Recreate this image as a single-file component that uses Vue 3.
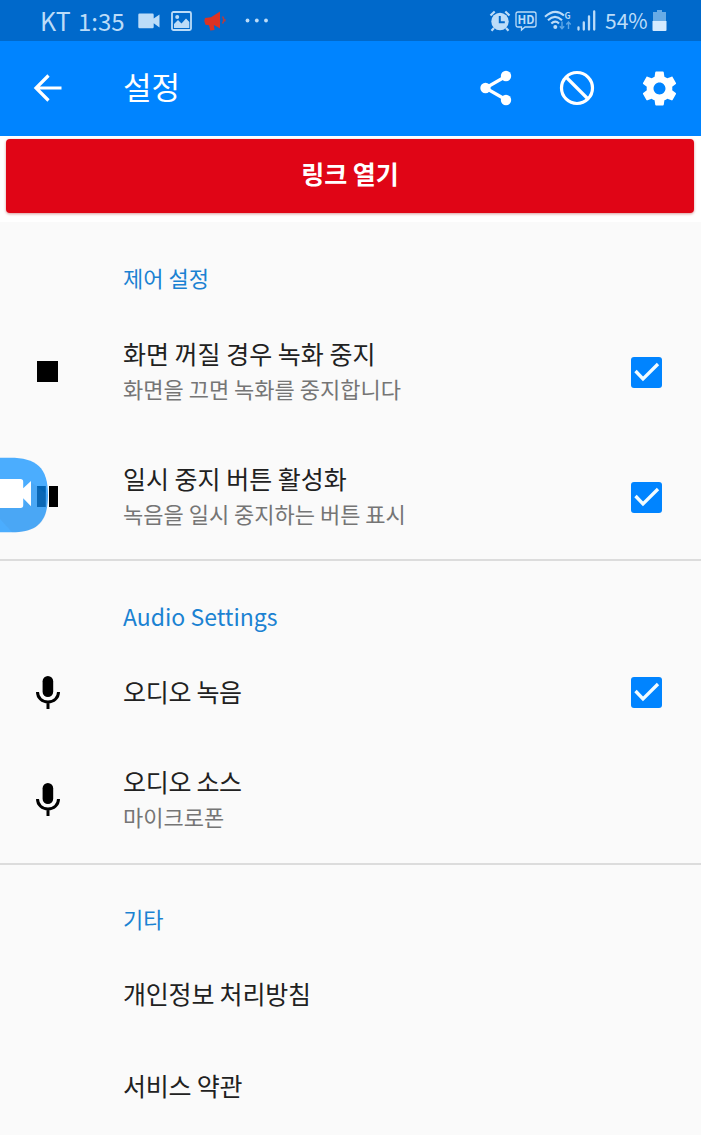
<script setup>
import { ref } from 'vue';

const sections = ref([
  {
    title: '제어 설정',
    key: 'control',
    items: [
      { icon: 'stop', title: '화면 꺼질 경우 녹화 중지', summary: '화면을 끄면 녹화를 중지합니다', checked: true },
      { icon: 'pause', title: '일시 중지 버튼 활성화', summary: '녹음을 일시 중지하는 버튼 표시', checked: true },
    ],
  },
  {
    title: 'Audio Settings',
    key: 'audio',
    items: [
      { icon: 'mic', title: '오디오 녹음', checked: true },
      { icon: 'mic', title: '오디오 소스', summary: '마이크로폰' },
    ],
  },
  {
    title: '기타',
    key: 'etc',
    items: [{ title: '개인정보 처리방침' }, { title: '서비스 약관' }],
  },
]);

const toggle = (item) => {
  if (item.checked !== undefined) item.checked = !item.checked;
};
</script>

<template>
  <div class="screen">
    <div class="status-bar">
      <div class="status-left">
        <span class="carrier">KT</span>
        <span class="clock">1:35</span>
        <svg class="st-video" width="22" height="16" viewBox="0 0 22 16">
          <path d="M1.5 0.5h13a1.2 1.2 0 0 1 1.2 1.2V5.5L21.5 1.5v13L15.7 10.3V14a1.2 1.2 0 0 1-1.2 1.2h-13A1.2 1.2 0 0 1 .3 14V1.7A1.2 1.2 0 0 1 1.5.5z" />
        </svg>
        <svg class="st-image" width="21" height="20" viewBox="0 0 21 20">
          <rect x="1" y="1" width="19" height="18" rx="1.5" fill="none" stroke="#bcdcf8" stroke-width="1.8" />
          <circle cx="6.2" cy="6" r="2" />
          <path d="M3 17V13L7 9l3.500 3.500L15 7.500l3.300 3.500V17z" />
        </svg>
        <svg class="st-horn" width="22" height="20" viewBox="0 0 22 20">
          <path fill="#dc3222" d="M1 7l6-.8L16 .5v17L10.500 14.200l-.7 0 .8 4.800-4.300.5-1.300-5.300-3.500-.4L.3 10z" />
          <path d="M18.500 5.500q2.500 3.200 0 7M20.800 8v2.500" fill="none" stroke="#dc3222" stroke-opacity="0.800" stroke-width="1.500" />
        </svg>
        <svg class="st-more" width="24" height="5" viewBox="0 0 24 5">
          <circle cx="2.500" cy="2.500" r="1.900" />
          <circle cx="11.800" cy="2.500" r="1.900" />
          <circle cx="21" cy="2.500" r="1.900" />
        </svg>
      </div>
      <div class="status-right">
        <svg width="22" height="22" viewBox="0 0 22 22">
          <circle cx="11" cy="11.500" r="8.700" />
          <path d="M1.500 5.500l4.200-4M20.500 5.500l-4.200-4M5 18l-2.500 2.800M17 18l2.500 2.800" stroke="#bcdcf8" stroke-width="2.200" fill="none" />
          <path d="M10.800 6v6.300h5" stroke="#036acb" stroke-width="2" fill="none" />
        </svg>
        <svg class="st-hd" width="22" height="20" viewBox="0 0 22 20">
          <path d="M3 1h16q2 0 2 2v11q0 2-2 2h-9l-3.500 3V16H3q-2 0-2-2V3q0-2 2-2z" fill="none" stroke="#bcdcf8" stroke-width="1.300" />
          <text x="11" y="12.800" text-anchor="middle" font-size="11.500" font-weight="700">HD</text>
        </svg>
        <svg class="st-wifi" width="28" height="22" viewBox="0 0 28 22">
          <g fill="none" stroke="#bcdcf8" stroke-width="2.100">
            <path d="M1 6.700Q11 -2.500 20 5.500" />
            <path d="M4 10.200Q11 3.500 18 10.200" />
            <path d="M7.300 13.500Q11.300 9.800 15 13.500" />
          </g>
          <circle cx="11.300" cy="17" r="2" />
          <text x="20.500" y="9" font-size="8.500" font-weight="700">G</text>
          <path d="M18 11.500v7M15.800 16.300l2.200 2.500 2.200-2.500M24.500 19v-7M22.300 14.500l2.200-2.500 2.200 2.500" fill="none" stroke="#5fa7e6" stroke-width="1.400" />
        </svg>
        <svg class="st-signal" width="20" height="21" viewBox="0 0 20 21">
          <path d="M1.500 17.500v2M6.800 12.500v7M12 6.500v13M17.200 1.500v18" stroke="#bcdcf8" stroke-width="2.300" stroke-linecap="round" />
        </svg>
        <span class="battery-text">54%</span>
        <svg class="st-battery" width="15" height="22" viewBox="0 0 15 22">
          <path d="M5 0h5v2h4v10H1V2h4z" fill="#68abe6" />
          <path d="M.5 11h14v9q0 1-1 1h-12q-1 0-1-1z" fill="#d4eaff" />
        </svg>
      </div>
    </div>

    <header class="app-bar">
      <svg class="back" width="28" height="28" viewBox="0 0 28 28">
        <path d="M14.500 1.500L2 14l12.500 12.500M2 14h25.500" fill="none" stroke="#fff" stroke-width="3.200" />
      </svg>
      <h1>설정</h1>
      <div class="actions">
        <svg width="32" height="36" viewBox="0 0 32 36">
          <path d="M26.500 6L5.500 18l21 12" fill="none" stroke="#fff" stroke-width="3.200" />
          <circle cx="26" cy="6" r="5.200" fill="#fff" />
          <circle cx="5.500" cy="18" r="5.200" fill="#fff" />
          <circle cx="26" cy="30" r="5.200" fill="#fff" />
        </svg>
        <svg width="36" height="36" viewBox="0 0 36 36">
          <circle cx="18" cy="18" r="15.500" fill="none" stroke="#fff" stroke-width="3.200" />
          <path d="M7 7l22 22" stroke="#fff" stroke-width="3.200" />
        </svg>
        <svg width="41" height="41" viewBox="0 0 24 24">
          <path fill="#fff" d="M19.430 12.980c.04-.32.07-.64.07-.98s-.03-.66-.07-.98l2.110-1.650c.19-.15.24-.42.12-.64l-2-3.460c-.12-.22-.39-.3-.61-.22l-2.490 1c-.52-.4-1.080-.73-1.690-.98l-.38-2.650C14.460 2.180 14.250 2 14 2h-4c-.25 0-.46.18-.49.42l-.38 2.650c-.61.25-1.170.59-1.690.98l-2.490-1c-.23-.09-.49 0-.61.22l-2 3.460c-.13.22-.07.49.12.64l2.110 1.650c-.04.32-.07.65-.07.98s.03.66.07.98l-2.110 1.650c-.19.15-.24.42-.12.64l2 3.460c.12.22.39.3.61.22l2.490-1c.52.4 1.080.73 1.690.98l.38 2.650c.03.24.24.42.49.42h4c.25 0 .46-.18.49-.42l.38-2.650c.61-.25 1.170-.59 1.690-.98l2.490 1c.23.09.49 0 .61-.22l2-3.460c.12-.22.07-.49-.12-.64l-2.110-1.650zM12 15.500c-1.930 0-3.500-1.570-3.500-3.500s1.570-3.500 3.500-3.500 3.500 1.570 3.500 3.500-1.570 3.500-3.500 3.500z" />
        </svg>
      </div>
    </header>

    <div class="banner">
      <button class="banner-btn">링크 열기</button>
    </div>

    <main>
      <section v-for="section in sections" :key="section.key" :class="section.key">
        <h2>{{ section.title }}</h2>
        <div v-for="item in section.items" :key="item.title" class="row" @click="toggle(item)">
          <div class="row-icon">
            <svg v-if="item.icon === 'stop'" width="21" height="21"><rect width="21" height="21" /></svg>
            <svg v-else-if="item.icon === 'pause'" width="21" height="21">
              <rect width="8.800" height="21" />
              <rect x="12" width="9" height="21" />
            </svg>
            <svg v-else-if="item.icon === 'mic'" width="24" height="33" viewBox="0 0 24 33">
              <rect x="6.600" y="0" width="10.600" height="21" rx="5.300" />
              <path d="M1.500 16c0 6 4.800 10 10.500 10s10.500-4 10.500-10M12 26v7" fill="none" stroke="#000" stroke-width="3" />
            </svg>
          </div>
          <div class="row-text">
            <p class="title">{{ item.title }}</p>
            <p v-if="item.summary" class="summary">{{ item.summary }}</p>
          </div>
          <div v-if="item.checked !== undefined" class="checkbox" :class="{ on: item.checked }">
            <svg v-if="item.checked" width="31" height="31" viewBox="0 0 31 31">
              <path d="M4.500 14l7.500 8L27 7" fill="none" stroke="#f2fcff" stroke-width="3.300" />
            </svg>
          </div>
        </div>
      </section>
    </main>

    <!-- floating recorder bubble, docked at the left edge -->
    <svg class="bubble" width="49" height="76" viewBox="0 0 49 76">
      <path d="M0 .7H10C36 .7 48 10 48 38S36 75.300 12 75.300H0z" fill="#008cff" fill-opacity="0.700" />
      <path d="M0 62l12 13.300C30 75.300 42 70 46 56L48 38 31 25 23 51H0z" fill="#4a86c4" fill-opacity="0.150" />
      <path d="M0 22h20.500q2.700 0 2.700 2.700v6.500L31 24v25.300l-7.800-8V48.300q0 2.700-2.700 2.700H0z" fill="#fff" />
    </svg>
  </div>
</template>

<style>
body {
  margin: 0;
  background: #fafafa;
}
</style>

<style scoped>
.screen {
  position: relative;
  width: 701px;
  height: 1135px;
  overflow: hidden;
  background: #fafafa;
  font-family: 'Noto Sans CJK KR', 'Noto Sans', sans-serif;
  color: #212121;
}

svg {
  display: block;
  flex: none;
  overflow: visible;
}

h1,
h2,
p {
  margin: 0;
  font-weight: 400;
  white-space: nowrap;
}

.status-bar {
  box-sizing: border-box;
  height: 41px;
  padding: 0 34px 0 40px;
  display: flex;
  align-items: center;
  justify-content: space-between;
  background: #0069cb;
  color: #bcdcf8;
  fill: #bcdcf8;
  font-size: 23px;
  line-height: 41px;
}

.status-left,
.status-right {
  display: flex;
  align-items: center;
}

.status-left {
  height: 40px;
}

.carrier {
  width: 38px;
  font-size: 25px;
}

.clock {
  width: 60px;
  font-size: 24px;
}

.st-image {
  margin-left: 11px;
}

.st-horn {
  margin-left: 12px;
}

.st-more {
  margin-left: 19px;
}

.st-hd {
  margin-left: 4px;
}

.st-wifi {
  margin-left: 7px;
}

.st-signal {
  margin-left: 5px;
}

.battery-text {
  width: 43px;
  margin-left: 8px;
  font-size: 21px;
}

.st-battery {
  margin-left: 4px;
}

.app-bar {
  box-sizing: border-box;
  height: 95px;
  padding: 0 21px 1px 34px;
  display: flex;
  align-items: center;
  background: #0084ff;
}

.app-bar h1 {
  height: 44px;
  margin-left: 61px;
  color: #fff;
  font-size: 31px;
  line-height: 40px;
}

.actions {
  display: flex;
  align-items: center;
  margin-left: auto;
  gap: 47px;
}

.actions svg:last-child {
  margin-left: -3px;
}

.banner {
  box-sizing: border-box;
  height: 86px;
  padding: 3px 7px 9px 6px;
  background: #fff;
}

.banner-btn {
  display: block;
  width: 100%;
  height: 74px;
  padding: 0 0 6px;
  border: none;
  border-radius: 4px;
  background: #e00516;
  box-shadow: 0 1px 3px rgba(160, 0, 0, 0.4);
  color: #fff;
  font-family: inherit;
  font-size: 25px;
  font-weight: 700;
}

section {
  box-sizing: border-box;
  padding-top: 27px;
  border-bottom: 2px solid #dcdcdc;
}

section h2 {
  height: 60px;
  padding-left: 123px;
  color: #1b82d2;
  font-size: 22px;
  line-height: 57px;
}

.row {
  display: flex;
  align-items: center;
  height: 125px;
}

.row-icon {
  width: 95px;
  display: flex;
  justify-content: center;
}

.row-text {
  flex: 1;
  margin-left: 28px;
  padding-bottom: 2px;
}

.title {
  font-size: 25px;
  line-height: 35px;
}

.summary {
  color: #757575;
  font-size: 22px;
  line-height: 35px;
}

.checkbox {
  box-sizing: border-box;
  width: 31px;
  height: 31px;
  margin: 1px 39px 0 0;
  border: 3px solid #757575;
  border-radius: 3px;
}

.checkbox.on {
  border: none;
  background: #0084ff;
}

.audio h2 {
  font-size: 23px;
}

.audio .row {
  height: 88px;
}

.audio .row:last-child {
  height: 127px;
}

.audio .title {
  letter-spacing: -0.3px;
}

.etc {
  padding-top: 25px;
  border-bottom: none;
}

.etc .row {
  height: 92px;
}

.etc .row-text {
  padding-bottom: 5px;
}

.etc .title {
  letter-spacing: -0.2px;
}

.bubble {
  position: absolute;
  left: 0;
  top: 457px;
}
</style>
